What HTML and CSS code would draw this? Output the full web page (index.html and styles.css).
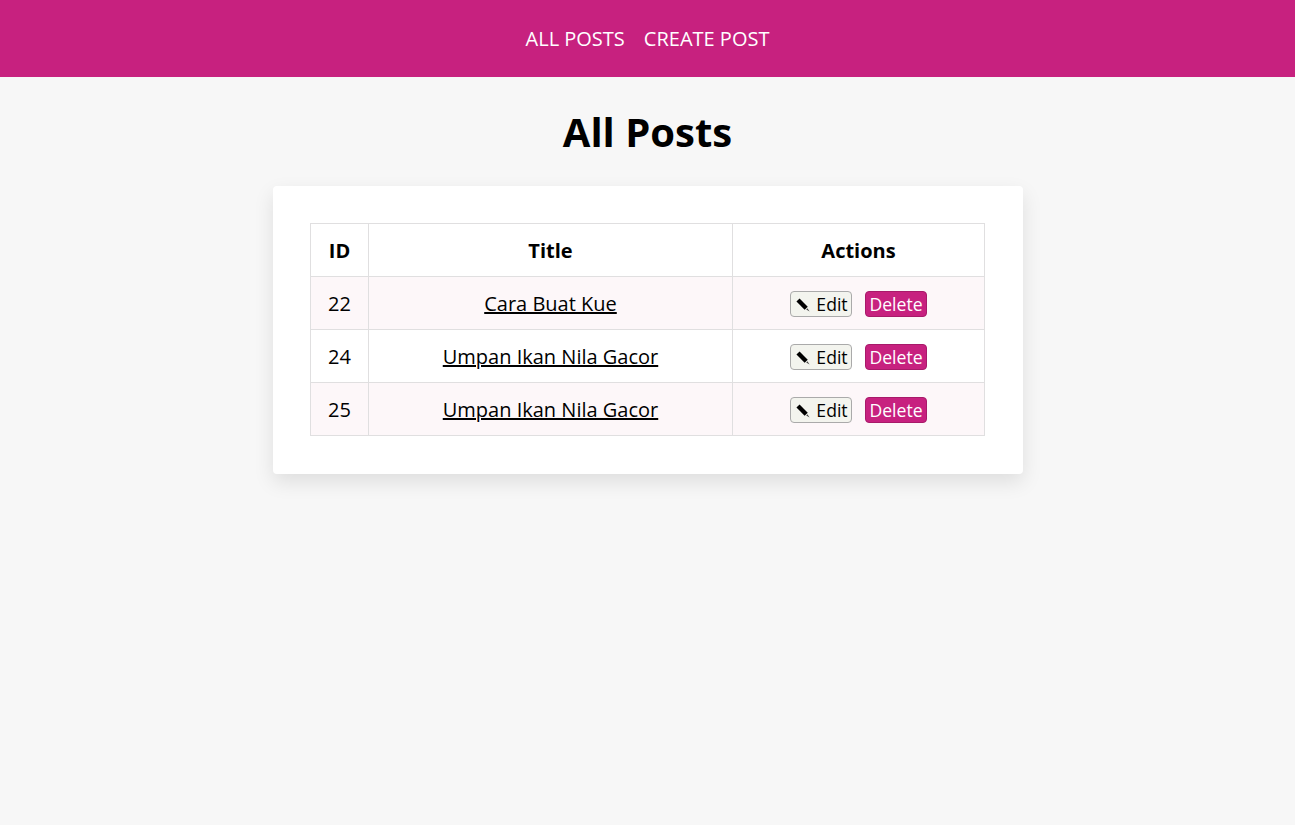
FILE: index.html
```html
<!DOCTYPE html>
<html lang="en">
<head>
<meta charset="UTF-8">
<meta name="viewport" content="width=device-width, initial-scale=1.0">
<title>All Posts</title>
<link rel="stylesheet" href="styles.css">
</head>
<body>

<nav class="navbar">
  <a href="#">ALL POSTS</a>
  <a href="#">CREATE POST</a>
</nav>

<h1>All Posts</h1>

<div class="card">
  <table>
    <thead>
      <tr>
        <th class="col-id">ID</th>
        <th class="col-title">Title</th>
        <th>Actions</th>
      </tr>
    </thead>
    <tbody>
      <tr>
        <td>22</td>
        <td><a href="#">Cara Buat Kue</a></td>
        <td>
          <div class="actions">
            <button class="btn-edit"><svg class="pencil" viewBox="0 0 14 14"><path d="M2 2 L10.2 10.2" stroke="#000" stroke-width="4.4" fill="none"/><path d="M11.4 10.2 L13.6 13.6 L10.2 11.4 Z" fill="#444"/></svg>Edit</button>
            <button class="btn-delete">Delete</button>
          </div>
        </td>
      </tr>
      <tr>
        <td>24</td>
        <td><a href="#">Umpan Ikan Nila Gacor</a></td>
        <td>
          <div class="actions">
            <button class="btn-edit"><svg class="pencil" viewBox="0 0 14 14"><path d="M2 2 L10.2 10.2" stroke="#000" stroke-width="4.4" fill="none"/><path d="M11.4 10.2 L13.6 13.6 L10.2 11.4 Z" fill="#444"/></svg>Edit</button>
            <button class="btn-delete">Delete</button>
          </div>
        </td>
      </tr>
      <tr>
        <td>25</td>
        <td><a href="#">Umpan Ikan Nila Gacor</a></td>
        <td>
          <div class="actions">
            <button class="btn-edit"><svg class="pencil" viewBox="0 0 14 14"><path d="M2 2 L10.2 10.2" stroke="#000" stroke-width="4.4" fill="none"/><path d="M11.4 10.2 L13.6 13.6 L10.2 11.4 Z" fill="#444"/></svg>Edit</button>
            <button class="btn-delete">Delete</button>
          </div>
        </td>
      </tr>
    </tbody>
  </table>
</div>

</body>
</html>
```

FILE: styles.css
```css
body {
  font-family: "Open Sans", sans-serif;
  background-color: #f7f7f7;
  color: #000;
  margin: 0;
  min-height: 100vh;
}
.navbar {
  background-color: #c7217f;
  height: 77px;
  display: flex;
  justify-content: center;
  align-items: center;
  gap: 19px;
}
.navbar a {
  color: white;
  font-size: 20px;
  text-decoration: none;
}
h1 {
  font-size: 40px;
  line-height: 54px;
  text-align: center;
  margin: 28px 0 27px;
}
.card {
  width: 675px;
  margin: 0 auto;
  padding: 37px 37.5px 38px;
  background-color: white;
  border-radius: 4px;
  box-shadow: 0 8px 20px rgba(0, 0, 0, 0.1);
}
table {
  width: 100%;
  border-collapse: collapse;
  font-size: 20px;
}
th, td {
  border: 1px solid #e0dfe0;
  height: 52px;
  padding: 0;
  text-align: center;
}
.col-id {
  width: 57px;
}
.col-title {
  width: 363px;
}
tbody tr:nth-child(odd) {
  background-color: #fdf7f9;
}
td a {
  color: black;
}
.actions {
  display: flex;
  justify-content: center;
  gap: 13px;
  padding-top: 2px;
}
button {
  font-family: inherit;
  font-size: 17.6px;
  height: 26px;
  width: 62px;
  padding: 0;
  border-radius: 4px;
  box-sizing: border-box;
  display: flex;
  align-items: center;
  justify-content: center;
}
.btn-edit {
  background-color: #f3f4ee;
  border: 1px solid #aaa;
  color: black;
}
.pencil {
  width: 14px;
  height: 14px;
  margin: 1px 6px 0 2px;
}
.btn-delete {
  background-color: #c7217f;
  border: 1px solid #a81a6a;
  color: white;
}
```
